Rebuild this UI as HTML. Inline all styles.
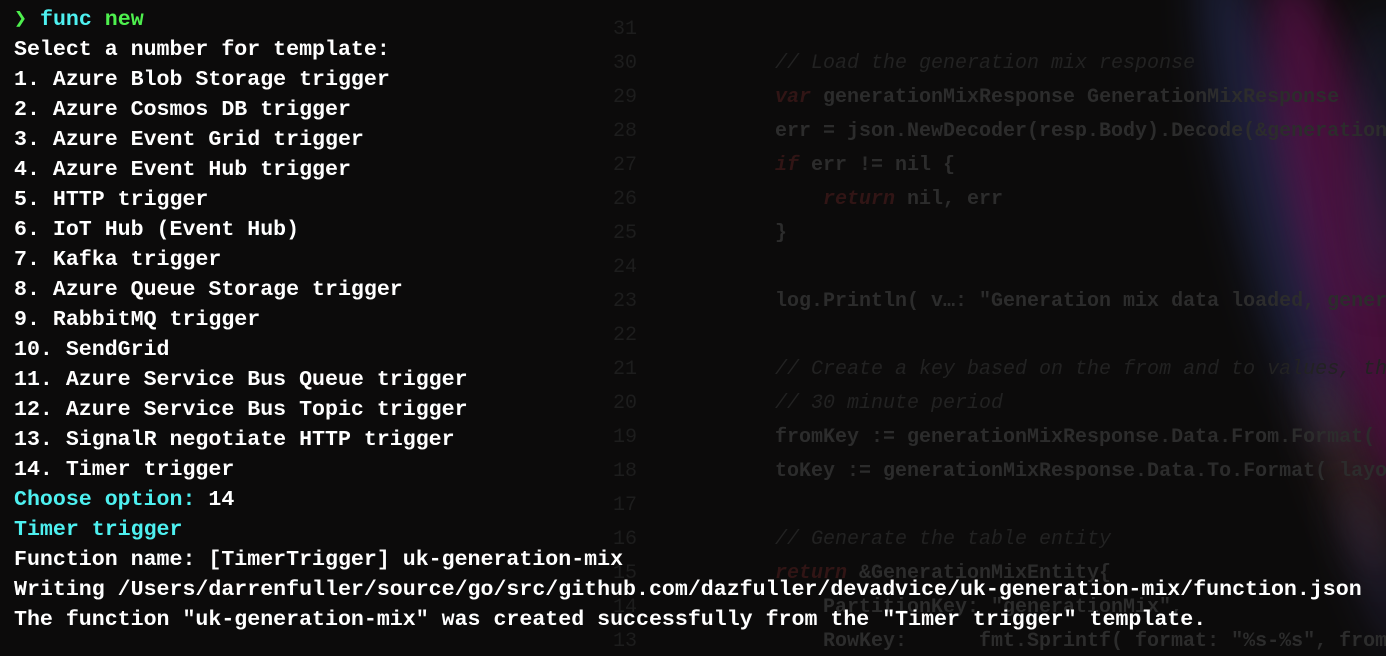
<!DOCTYPE html>
<html><head><meta charset="utf-8"><style>
html,body{margin:0;padding:0;width:1386px;height:656px;overflow:hidden}
body{background:#0c0b0b;position:relative;font-family:"Liberation Mono","DejaVu Sans Mono",monospace}
.glow{position:absolute;left:0;top:0;width:1386px;height:656px;overflow:hidden}
.glow i{position:absolute;border-radius:50%;filter:blur(20px)}
.code{position:absolute;left:0;top:3px;font-size:20px;color:#2c2c2c;font-weight:bold;white-space:pre}
.code div{position:absolute;height:34px;line-height:34px}
.ln{color:#1d1d1d;font-weight:normal}
.cm{color:#222;font-style:italic;font-weight:normal}
.kw{color:#311515;font-style:italic}
.term{position:absolute;left:14px;top:5px;font-size:21.6px;font-weight:bold;color:#fff;white-space:pre;line-height:30px}
.c{color:#4ef0f0}.g{color:#4ef04e}
</style></head><body>
<div class="glow">
<i style="left:1235px;top:-60px;width:80px;height:520px;background:rgba(60,70,150,.32);transform:rotate(-14deg)"></i>
<i style="left:1300px;top:-40px;width:100px;height:560px;background:rgba(150,20,120,.42);transform:rotate(-14deg)"></i>
<i style="left:1355px;top:0px;width:50px;height:300px;background:rgba(40,50,90,.4)"></i>
<i style="left:1325px;top:360px;width:45px;height:220px;background:rgba(120,70,70,.32);transform:rotate(-20deg)"></i>
<i style="left:1358px;top:480px;width:36px;height:180px;background:rgba(70,60,120,.3);transform:rotate(-20deg)"></i>
</div>
<div class="code">
<div class="ln" style="left:613px;top:10px">31</div>
<div class="ln" style="left:613px;top:44px">30</div><div class="cm" style="left:775px;top:44px">// Load the generation mix response</div>
<div class="ln" style="left:613px;top:78px">29</div><div style="left:775px;top:78px"><span class="kw">var</span> generationMixResponse GenerationMixResponse</div>
<div class="ln" style="left:613px;top:112px">28</div><div style="left:775px;top:112px">err = json.NewDecoder(resp.Body).Decode(&amp;generation</div>
<div class="ln" style="left:613px;top:146px">27</div><div style="left:775px;top:146px"><span class="kw">if</span> err != nil {</div>
<div class="ln" style="left:613px;top:180px">26</div><div style="left:775px;top:180px">    <span class="kw">return</span> nil, err</div>
<div class="ln" style="left:613px;top:214px">25</div><div style="left:775px;top:214px">}</div>
<div class="ln" style="left:613px;top:248px">24</div>
<div class="ln" style="left:613px;top:282px">23</div><div style="left:775px;top:282px">log.Println( v…: "Generation mix data loaded, gener</div>
<div class="ln" style="left:613px;top:316px">22</div>
<div class="ln" style="left:613px;top:350px">21</div><div class="cm" style="left:775px;top:350px">// Create a key based on the from and to values, th</div>
<div class="ln" style="left:613px;top:384px">20</div><div class="cm" style="left:775px;top:384px">// 30 minute period</div>
<div class="ln" style="left:613px;top:418px">19</div><div style="left:775px;top:418px">fromKey := generationMixResponse.Data.From.Format(</div>
<div class="ln" style="left:613px;top:452px">18</div><div style="left:775px;top:452px">toKey := generationMixResponse.Data.To.Format( layou</div>
<div class="ln" style="left:613px;top:486px">17</div>
<div class="ln" style="left:613px;top:520px">16</div><div class="cm" style="left:775px;top:520px">// Generate the table entity</div>
<div class="ln" style="left:613px;top:554px">15</div><div style="left:775px;top:554px"><span class="kw">return</span> &amp;GenerationMixEntity{</div>
<div class="ln" style="left:613px;top:588px">14</div><div style="left:823px;top:588px">PartitionKey: "generationMix",</div>
<div class="ln" style="left:613px;top:622px">13</div><div style="left:823px;top:622px">RowKey:      fmt.Sprintf( format: "%s-%s", fromK</div>
</div>
<div class="term"><span class="g">❯</span> <span class="c">func</span> <span class="g">new</span>
Select a number for template:
1. Azure Blob Storage trigger
2. Azure Cosmos DB trigger
3. Azure Event Grid trigger
4. Azure Event Hub trigger
5. HTTP trigger
6. IoT Hub (Event Hub)
7. Kafka trigger
8. Azure Queue Storage trigger
9. RabbitMQ trigger
10. SendGrid
11. Azure Service Bus Queue trigger
12. Azure Service Bus Topic trigger
13. SignalR negotiate HTTP trigger
14. Timer trigger
<span class="c">Choose option:</span> 14
<span class="c">Timer trigger</span>
Function name: [TimerTrigger] uk-generation-mix
Writing /Users/darrenfuller/source/go/src/github.com/dazfuller/devadvice/uk-generation-mix/function.json
The function "uk-generation-mix" was created successfully from the "Timer trigger" template.</div>
</body></html>
